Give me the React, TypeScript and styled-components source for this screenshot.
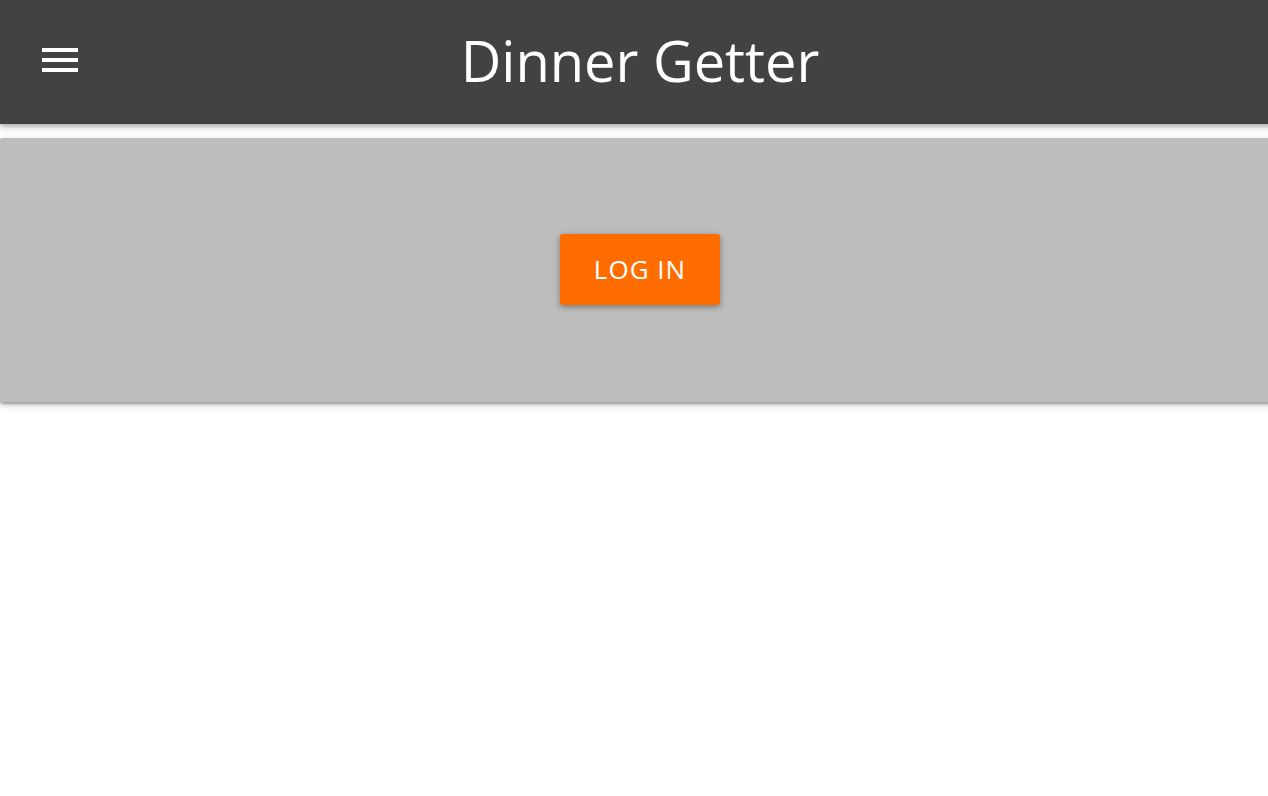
import React from "react";
import styled, { createGlobalStyle } from "styled-components";

const Global = createGlobalStyle`
  html, body { margin: 0; padding: 0; background: #ffffff; overflow: hidden; }
  body { font-family: "Open Sans", "Noto Sans", sans-serif; }
`;

const Page = styled.div`
  width: 1280px;
  display: flex;
  flex-direction: column;
  gap: 14px;
  padding-bottom: 20px;
`;

const Header = styled.header`
  position: relative;
  z-index: 2;
  height: 124px;
  background: #424242;
  display: flex;
  align-items: center;
  justify-content: center;
  box-shadow: 0 2px 5px rgba(0, 0, 0, 0.26), 0 2px 10px rgba(0, 0, 0, 0.16);
`;

const MenuButton = styled.button`
  position: absolute;
  left: 42px;
  top: 48px;
  width: 36px;
  height: 24px;
  padding: 0;
  border: 0;
  background: transparent;
  display: flex;
  flex-direction: column;
  justify-content: space-between;
  cursor: pointer;
`;

const Bar = styled.span`
  display: block;
  height: 4px;
  width: 100%;
  background: #ffffff;
`;

const Title = styled.h1`
  margin: 0;
  color: #ffffff;
  font-family: "Open Sans", sans-serif;
  font-weight: 400;
  font-size: 56px;
  line-height: 1;
  transform: translateY(-2px);
`;

const Card = styled.section`
  position: relative;
  z-index: 1;
  height: 264px;
  background: #bdbdbd;
  border-radius: 2px;
  display: flex;
  align-items: center;
  justify-content: center;
  box-shadow: 0 2px 3px rgba(0, 0, 0, 0.3), 0 3px 8px rgba(0, 0, 0, 0.18);
`;

const LoginButton = styled.button`
  width: 160px;
  height: 71px;
  margin-top: -2px;
  border: 0;
  border-radius: 3px;
  background: #ff6d00;
  color: #ffffff;
  font-family: "Open Sans", sans-serif;
  font-size: 26px;
  letter-spacing: 1px;
  text-transform: uppercase;
  box-shadow: 0 2px 5px rgba(0, 0, 0, 0.26), 0 2px 10px rgba(0, 0, 0, 0.12);
  cursor: pointer;
`;

export default function App() {
  return (
    <>
      <Global />
      <Page>
        <Header>
          <MenuButton aria-label="menu">
            <Bar />
            <Bar />
            <Bar />
          </MenuButton>
          <Title>Dinner Getter</Title>
        </Header>
        <Card>
          <LoginButton>Log in</LoginButton>
        </Card>
      </Page>
    </>
  );
}
